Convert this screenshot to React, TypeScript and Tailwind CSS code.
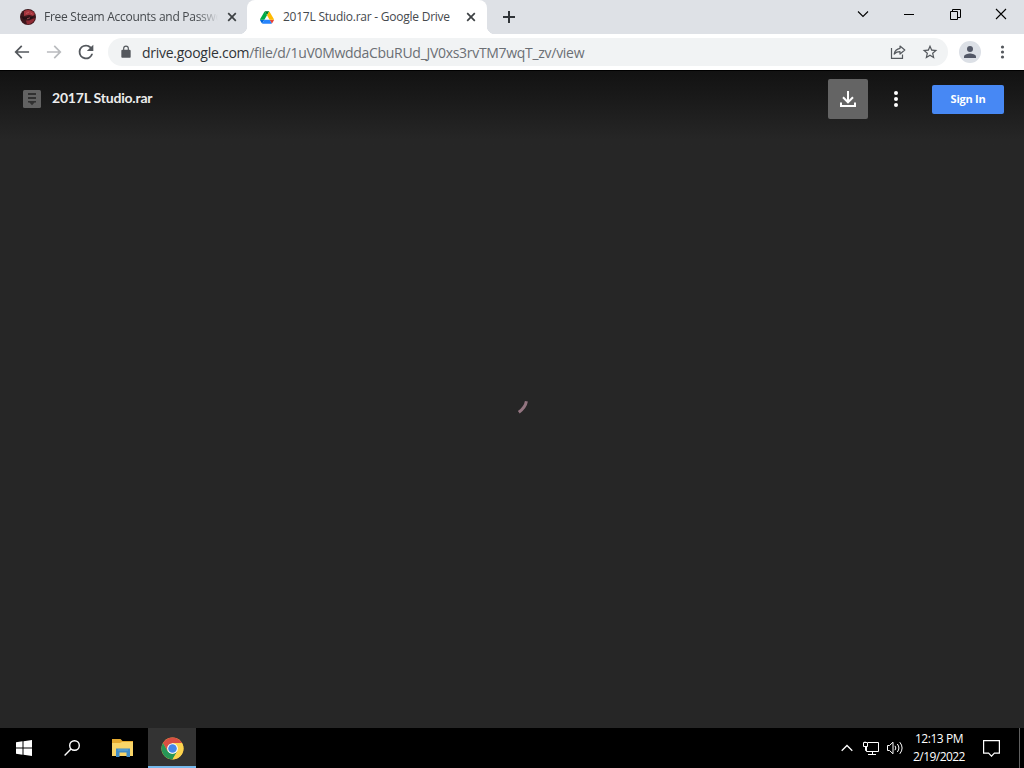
import React from "react";

const CloseIcon = () => (
  <svg className="size-3 shrink-0" viewBox="0 0 12 12" fill="none" stroke="#3c4043" strokeWidth="1.7">
    <path d="M2.2 2.2l7.6 7.6M9.8 2.2l-7.6 7.6" />
  </svg>
);

const SteamSiteIcon = () => (
  <svg className="size-4 shrink-0" viewBox="0 0 16 16">
    <circle cx="8" cy="8" r="8" fill="#3d171c" />
    <path d="M4 2.2A7.8 7.8 0 0 1 15 5L13 7 9 5.8 4 7z" fill="#a5353d" />
    <path d="M1 7l4 1.4L9 7.4l2 .8L14 7l-1.5 2.2-3 1.2-3-.4-3 .6z" fill="#241014" />
    <path d="M6 11.6l3 0 4-1.8 2-.6A8 8 0 0 1 7 15.6z" fill="#8f2b34" />
    <path d="M6 4.5l3-1.4M10.5 4l2 1.2M7 9.8l3-1" stroke="#cf6068" strokeWidth=".7" />
  </svg>
);

const DriveIcon = () => (
  <svg className="mr-px ml-px h-[13px] w-[14px] shrink-0" viewBox="0 0 87.3 78">
    <path d="m6.6 66.85 3.85 6.65c.8 1.4 1.95 2.5 3.3 3.3l13.75-23.8h-27.5c0 1.55.4 3.1 1.2 4.5z" fill="#0066da" />
    <path d="m43.65 25-13.75-23.8c-1.35.8-2.5 1.9-3.3 3.3l-25.4 44a9.06 9.06 0 0 0 -1.2 4.5h27.5z" fill="#00ac47" />
    <path d="m73.55 76.8c1.35-.8 2.5-1.9 3.3-3.3l1.6-2.75 7.65-13.25c.8-1.4 1.2-2.95 1.2-4.5h-27.5l5.85 11.5z" fill="#ea4335" />
    <path d="m43.65 25 13.75-23.8c-1.35-.8-2.9-1.2-4.5-1.2h-18.5c-1.6 0-3.15.45-4.5 1.2z" fill="#00832d" />
    <path d="m59.8 53h-32.3l-13.75 23.8c1.35.8 2.9 1.2 4.5 1.2h50.8c1.6 0 3.15-.45 4.5-1.2z" fill="#2684fc" />
    <path d="m73.4 26.5-12.7-22c-.8-1.4-1.95-2.5-3.3-3.3l-13.75 23.8 16.15 28h27.45c0-1.55-.4-3.1-1.2-4.5z" fill="#ffba00" />
  </svg>
);

const TabStrip = () => (
  <div className="flex h-[34px] bg-[#dee1e6] text-[12px] text-[#45494d]">
    <div className="flex h-full w-[247px] items-center pl-5">
      <SteamSiteIcon />
      <span className="ml-2 w-[174px] whitespace-nowrap tracking-[-0.27px] [mask-image:linear-gradient(to_right,black_88%,transparent)]">
        Free Steam Accounts and Passwo
      </span>
      <span className="ml-2">
        <CloseIcon />
      </span>
    </div>
    <div className="relative flex h-full w-[240px] items-center rounded-t-[8px] bg-white pl-3">
      <span className="absolute bottom-0 -left-2 size-2 bg-[radial-gradient(circle_at_0_0,#dee1e6_8px,white_8.5px)]" />
      <span className="absolute -right-2 bottom-0 size-2 bg-[radial-gradient(circle_at_100%_0,#dee1e6_8px,white_8.5px)]" />
      <DriveIcon />
      <span className="ml-2 w-[174px] whitespace-nowrap tracking-[-0.24px]">2017L Studio.rar - Google Drive</span>
      <span className="ml-2">
        <CloseIcon />
      </span>
    </div>
    <svg className="mt-[10px] ml-[15px] size-[14px]" viewBox="0 0 14 14" stroke="#303438" strokeWidth="2">
      <path d="M7 1v12M1 7h12" />
    </svg>
    <div className="ml-auto flex h-7 items-center text-black">
      <svg className="mr-[35px] h-2 w-3" viewBox="0 0 12 8" fill="none" stroke="currentColor" strokeWidth="1.1">
        <path d="M1 1.5l5 5 5-5" />
      </svg>
      <svg className="mr-[35px] h-[11px] w-[11px]" viewBox="0 0 11 11" fill="none" stroke="currentColor">
        <path d="M0 5.5h10" />
      </svg>
      <svg className="mr-[34px] size-[11px]" viewBox="0 0 11 11" fill="none" stroke="currentColor">
        <path d="M.5 2.5h7v8h-7zM2.5 2.5v-2h8v8h-3" />
      </svg>
      <svg className="mr-[17px] size-[12px]" viewBox="0 0 12 12" fill="none" stroke="currentColor" strokeWidth="1.1">
        <path d="M1 1l10 10M11 1L1 11" />
      </svg>
    </div>
  </div>
);

const Toolbar = () => (
  <div className="flex h-[37px] items-center border-b border-black bg-white text-[#54585d]">
    <svg className="ml-3 size-5" viewBox="0 0 24 24" fill="currentColor">
      <path d="M20.5 11H6.83l5.59-5.59L11 4l-8 8 8 8 1.41-1.41L6.83 13H20.5z" />
    </svg>
    <svg className="ml-3 size-5 text-[#b9bbbe]" viewBox="0 0 24 24" fill="currentColor">
      <path d="M3.5 13h13.67l-5.59 5.59L13 20l8-8-8-8-1.41 1.41L17.17 11H3.5z" />
    </svg>
    <svg className="ml-3 size-5" viewBox="0 0 24 24" fill="currentColor">
      <path d="M18.2 5.8A8.8 8.8 0 0 0 12 3.2a8.8 8.8 0 1 0 8.5 11h-2.3A6.6 6.6 0 1 1 12 5.4c1.8 0 3.4.7 4.6 1.9L13 10.9h7.8V3.2z" />
    </svg>
    <div className="ml-3 flex h-7 w-[840px] items-center rounded-full bg-[#f1f3f4]">
      <svg className="ml-[11px] h-[14px] w-[14px]" viewBox="0 0 24 24" fill="currentColor">
        <path d="M18 8h-1V6A5 5 0 0 0 7 6v2H6a2 2 0 0 0-2 2v10c0 1.1.9 2 2 2h12a2 2 0 0 0 2-2V10a2 2 0 0 0-2-2zm-9 0V6a3 3 0 0 1 6 0v2z" />
      </svg>
      <span className="ml-[9px] text-[14px] tracking-[-0.3px] whitespace-nowrap text-[#6b6f74]">
        <span className="tracking-[-0.27px] text-[#303337]">drive.google.com</span>
        /file/d/1uV0MwddaCbuRUd_JV0xs3rvTM7wqT_zv/view
      </span>
      <svg className="mr-4 ml-auto size-4" viewBox="0 0 16 16" fill="none" stroke="currentColor" strokeWidth="1.2">
        <path d="M1.5 4v10.4h11V10.5" />
        <path d="M10 2l4.8 4L10 10V7.7C7.5 7.7 5.8 8.4 4.2 10c.5-3.2 2.5-5.1 5.8-5.7z" strokeLinejoin="round" />
      </svg>
      <svg className="mr-[10px] size-4" viewBox="0 0 24 24" fill="currentColor">
        <path d="M23 9.1l-7.9-.7L12 1 8.9 8.4 1 9.1l6 5.2-1.8 7.8L12 18l6.8 4.1-1.8-7.8zM12 15.8l-4.1 2.5L9 13.6l-3.6-3.2 4.8-.4L12 5.7l1.9 4.3 4.7.4-3.6 3.2 1.1 4.7z" />
      </svg>
    </div>
    <div className="ml-[11px] flex size-[22px] items-center justify-center rounded-full bg-[#dce0e6]">
      <svg className="size-[18px]" viewBox="0 0 24 24" fill="#535867">
        <circle cx="12" cy="8" r="4" />
        <path d="M4 20v-2c0-2.7 5.3-4 8-4s8 1.3 8 4v2z" />
      </svg>
    </div>
    <svg className="ml-3 size-5" viewBox="0 0 20 20" fill="currentColor">
      <circle cx="9.5" cy="5" r="1.6" />
      <circle cx="9.5" cy="10" r="1.6" />
      <circle cx="9.5" cy="15" r="1.6" />
    </svg>
  </div>
);

const Viewer = () => (
  <div className="flex flex-1 flex-col bg-[#262626]">
    <div className="flex h-[76px] items-start bg-linear-to-b from-[#121212] to-[#262626] to-90%">
      <svg className="mt-[19px] ml-[23px] size-[18px]" viewBox="0 0 18 18">
        <rect width="18" height="18" rx="1.5" fill="#626262" />
        <path d="M5 3h8v2H5zM5 7h8v2H5zM5 11h8v1.5h-1.5L9 15.3l-2.5-2.8H5z" fill="#303030" />
      </svg>
      <span className="mt-[17px] ml-[11px] font-['Lato'] text-[14px] leading-5 font-bold tracking-[-0.2px] whitespace-nowrap text-[#ececec]">
        2017L Studio.rar
      </span>
      <div className="ml-auto flex pt-2">
        <button className="flex size-10 items-center justify-center rounded-[2px] bg-[#646464]">
          <svg className="size-6" viewBox="0 0 24 24" fill="none" stroke="white" strokeWidth="2">
            <path d="M12 4v11M7 10.3l5 5 5-5M5 15.5V19h14v-3.5" />
          </svg>
        </button>
        <svg className="mt-2 ml-4 size-6" viewBox="0 0 24 24" fill="white">
          <circle cx="12" cy="6" r="2" />
          <circle cx="12" cy="12" r="2" />
          <circle cx="12" cy="18" r="2" />
        </svg>
        <button className="mt-[6px] mr-5 ml-6 flex h-[29px] w-[72px] items-center justify-center rounded-[2px] bg-[#4788f4] font-['Open_Sans'] text-[11px] font-bold tracking-[-0.25px] text-white">
          Sign In
        </button>
      </div>
    </div>
    {/* Loading spinner */}
    <svg className="mt-[250px] ml-[512px] size-5" viewBox="0 0 20 20" fill="none" stroke="#937580" strokeWidth="3">
      <path d="M14.4 4.2C13.8 8 11.3 11.8 6.8 15.2" />
    </svg>
  </div>
);

const Taskbar = () => (
  <div className="flex h-10 bg-black text-white">
    <div className="flex w-12 items-center justify-center">
      <svg className="size-4" viewBox="0 0 16 16" fill="white">
        <path d="M0 2.2l6.5-.9v6.2H0zM7.5 1.2L16 0v7.5H7.5zM0 8.5h6.5v6.2L0 13.8zM7.5 8.5H16V16l-8.5-1.2z" />
      </svg>
    </div>
    <div className="flex w-12 items-center justify-center">
      <svg className="size-4" viewBox="0 0 16 16" fill="none" stroke="white" strokeWidth="1.4">
        <circle cx="10.5" cy="5.5" r="4.8" />
        <path d="M7 9L.6 15.4" />
      </svg>
    </div>
    <div className="flex w-[52px] items-center justify-center">
      <svg className="ml-[2px] h-[18px] w-[22px]" viewBox="0 0 22 18">
        <path d="M0 0h8.5l2 2H21v3H0z" fill="#e5aa30" />
        <path d="M0 4h8l2-1h11v14H0z" fill="#f9d568" />
        <path d="M4 18V9.5h14V18h-3.5v-4.5h-7V18z" fill="#408cc6" />
        <path d="M6 11h10" stroke="#60a8d8" />
      </svg>
    </div>
    <div className="flex w-12 items-center justify-center border-b-2 border-[#76b9ed] bg-[#333333]">
      <svg className="mt-[2px] size-[23px]" viewBox="0 0 48 48">
        <circle cx="24" cy="24" r="23" fill="#f2bd42" />
        <path d="M4.1 12.5A23 23 0 0 1 43.9 12.5H24L14 29.5z" fill="#d94f43" />
        <path d="M4.1 12.5A23 23 0 0 0 24 47l10-17.3L24 35.5l-10-5.8z" fill="#279657" />
        <path d="M24 47A23 23 0 0 0 43.9 12.5H24l10 17.2z" fill="#fcd34e" />
        <circle cx="24" cy="24" r="11.2" fill="#fff" />
        <circle cx="24" cy="24" r="9" fill="#4587e8" />
      </svg>
    </div>
    <div className="ml-auto flex items-center">
      <svg className="h-2 w-3" viewBox="0 0 12 8" fill="none" stroke="white" strokeWidth="1.3">
        <path d="M.7 6.8L6 1.5l5.3 5.3" />
      </svg>
      <svg className="ml-[10px] h-[14px] w-[17px]" viewBox="0 0 17 14" fill="none" stroke="white">
        <path d="M5 1.5h10.5v9H3.5V6M9.5 10.5v3M5 13.5h8M.5 1.5h4v4h-4zM2.5 5.5v4h1M2 .5v1" />
      </svg>
      <svg className="ml-[7px] h-[14px] w-[17px]" viewBox="0 0 17 14" fill="none" stroke="white">
        <path d="M.5 4.5h2L6 1.2v11.6L2.5 9.5h-2zM8 4.8q1.7 2.2 0 4.4M10.3 3q3.2 4 0 8M12.8 1.2q4.6 5.8 0 11.6" />
      </svg>
      <div className="ml-[9px] w-[52px] text-center text-[12px] leading-[18px] whitespace-nowrap">
        <div className="tracking-[-0.45px]">12:13 PM</div>
        <div className="tracking-[-0.55px]">2/19/2022</div>
      </div>
      <svg className="ml-[18px] h-[17px] w-[17px]" viewBox="0 0 17 17" fill="none" stroke="white" strokeWidth="1.2">
        <path d="M.6.6h15.8v12.6h-5L8.5 16.2l-2.9-3h-5z" />
      </svg>
      <span className="mr-1 ml-[19px] h-full w-px bg-[#606060]" />
    </div>
  </div>
);

export default function App() {
  return (
    <main className="flex h-[768px] w-[1024px] flex-col overflow-hidden font-['Open_Sans',sans-serif]">
      <TabStrip />
      <Toolbar />
      <Viewer />
      <Taskbar />
    </main>
  );
}
